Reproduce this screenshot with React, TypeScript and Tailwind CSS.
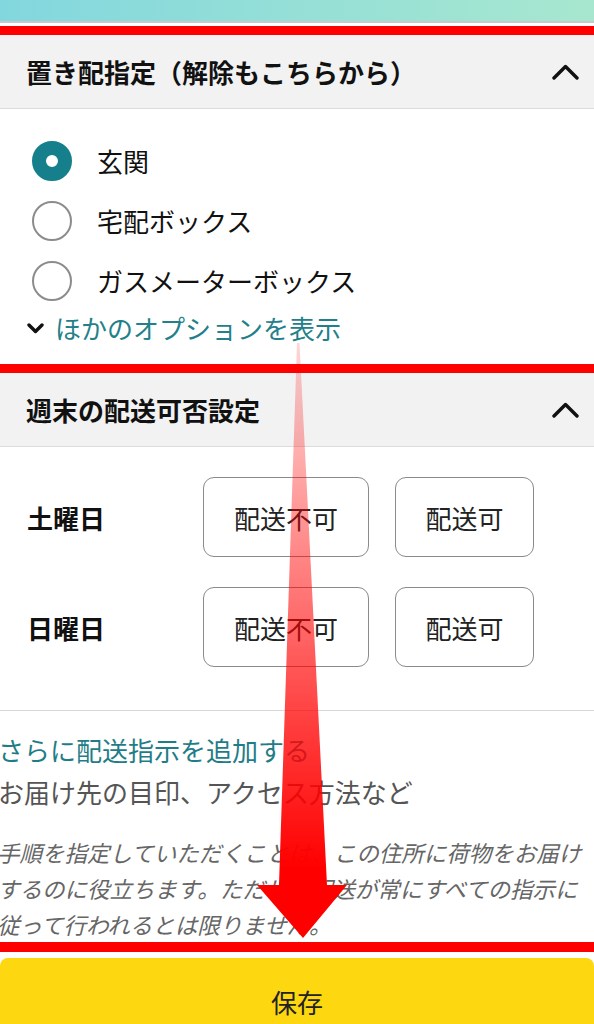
import { useState } from 'react';

const FONT = { fontFamily: '"Noto Sans CJK JP", "Noto Sans", sans-serif' };

function ChevronUp() {
  return (
    <svg width="27" height="16" viewBox="0 0 27 16" className="block">
      <polyline points="2,14 13.5,2.5 25,14" fill="none" stroke="#111" strokeWidth="3.4" strokeLinecap="round" strokeLinejoin="round" />
    </svg>
  );
}

function ChevronDown() {
  return (
    <svg width="17" height="11" viewBox="0 0 17 11" className="block">
      <polyline points="2,2 8.5,8.5 15,2" fill="none" stroke="#111" strokeWidth="3.4" strokeLinecap="round" strokeLinejoin="round" />
    </svg>
  );
}

function SectionHeader({ title }: { title: string }) {
  return (
    <div className="flex items-center justify-between h-[74px] pl-[26px] pr-[15px] bg-[#f2f2f2] border-b border-[#dcdcdc]">
      <span className="text-[26px] font-bold text-[#111] leading-none">{title}</span>
      <ChevronUp />
    </div>
  );
}

function Radio({ label, checked, onClick }: { label: string; checked: boolean; onClick: () => void }) {
  return (
    <button onClick={onClick} className="flex items-center h-[60px] pl-[32px] text-left">
      {checked ? (
        <span className="w-[40px] h-[40px] rounded-full border-[14px] border-[#157f8c] bg-white" />
      ) : (
        <span className="w-[40px] h-[40px] rounded-full border-2 border-[#8c8c8c] bg-white" />
      )}
      <span className="ml-[25px] text-[26px] text-[#111] leading-none">{label}</span>
    </button>
  );
}

function DayRow({ day }: { day: string }) {
  return (
    <div className="flex items-center">
      <span className="w-[203px] shrink-0 pl-[27px] text-[26px] font-bold text-[#111]">{day}</span>
      <button className="w-[166px] h-[80px] rounded-[11px] border border-[#8a8a8a] text-[26px] text-[#222]">配送不可</button>
      <button className="ml-[26px] w-[139px] h-[80px] rounded-[11px] border border-[#8a8a8a] text-[26px] text-[#222]">配送可</button>
    </div>
  );
}

function Arrow() {
  return (
    <svg width="594" height="1024" className="absolute top-0 left-0 pointer-events-none">
      <defs>
        <linearGradient id="arrowFill" gradientUnits="userSpaceOnUse" x1="0" y1="343" x2="0" y2="940">
          <stop offset="0" stopColor="#ff0000" stopOpacity="0.16" />
          <stop offset="0.3" stopColor="#ff0000" stopOpacity="0.42" />
          <stop offset="0.6" stopColor="#ff0000" stopOpacity="0.72" />
          <stop offset="0.88" stopColor="#ff0000" stopOpacity="1" />
        </linearGradient>
      </defs>
      <polygon
        points="297,343 299.5,343 327,885 347,885 303,938 257,885 279,885"
        fill="url(#arrowFill)"
      />
    </svg>
  );
}

export default function App() {
  const [place, setPlace] = useState('玄関');
  const options = ['玄関', '宅配ボックス', 'ガスメーターボックス'];

  return (
    <div className="relative w-[594px] h-[1024px] overflow-hidden bg-white" style={FONT}>
      {/* top band */}
      <div className="h-[21px] bg-gradient-to-r from-[#82d7de] to-[#a7e7cf]" />
      <div className="h-[2px] bg-[#c9c9c9]" />
      <div className="h-[3px]" />
      <div className="h-[9px] bg-[#ff0000]" />

      <SectionHeader title="置き配指定（解除もこちらから）" />

      <div className="flex flex-col pt-[22px] pb-[19px]">
        {options.map((o) => (
          <Radio key={o} label={o} checked={place === o} onClick={() => setPlace(o)} />
        ))}
        <div className="flex items-center h-[34px] pl-[27px]">
          <ChevronDown />
          <span className="ml-[11px] text-[26px] text-[#23808a] leading-none">ほかのオプションを表示</span>
        </div>
      </div>

      <div className="h-[9px] bg-[#ff0000]" />
      <SectionHeader title="週末の配送可否設定" />

      <div className="flex flex-col gap-[30px] pt-[30px] pb-[43px]">
        <DayRow day="土曜日" />
        <DayRow day="日曜日" />
      </div>

      <div className="h-px bg-[#d9d9d9]" />

      <div className="flex flex-col pt-[21px] pl-[1px] pr-[4px]">
        <span className="-ml-[3px] text-[26px] leading-[36px] text-[#1f7d88]">さらに配送指示を追加する</span>
        <span className="-ml-[3px] mt-[6px] text-[26px] leading-[36px] text-[#555]">お届け先の目印、アクセス方法など</span>
        <div className="-ml-[4px] mt-[24px] flex flex-col text-[22.5px] leading-[36px] italic text-[#666] whitespace-nowrap">
          <span>手順を指定していただくことは、この住所に荷物をお届け</span>
          <span>するのに役立ちます。ただし、配送が常にすべての指示に</span>
          <span>従って行われるとは限りません。</span>
        </div>
      </div>

      <div className="h-[10px] bg-[#ff0000]" />
      <div className="h-[6px]" />
      <button className="w-full h-[86px] rounded-t-[8px] bg-[#fdd811] text-[26px] text-[#222]">保存</button>

      <Arrow />
    </div>
  );
}
